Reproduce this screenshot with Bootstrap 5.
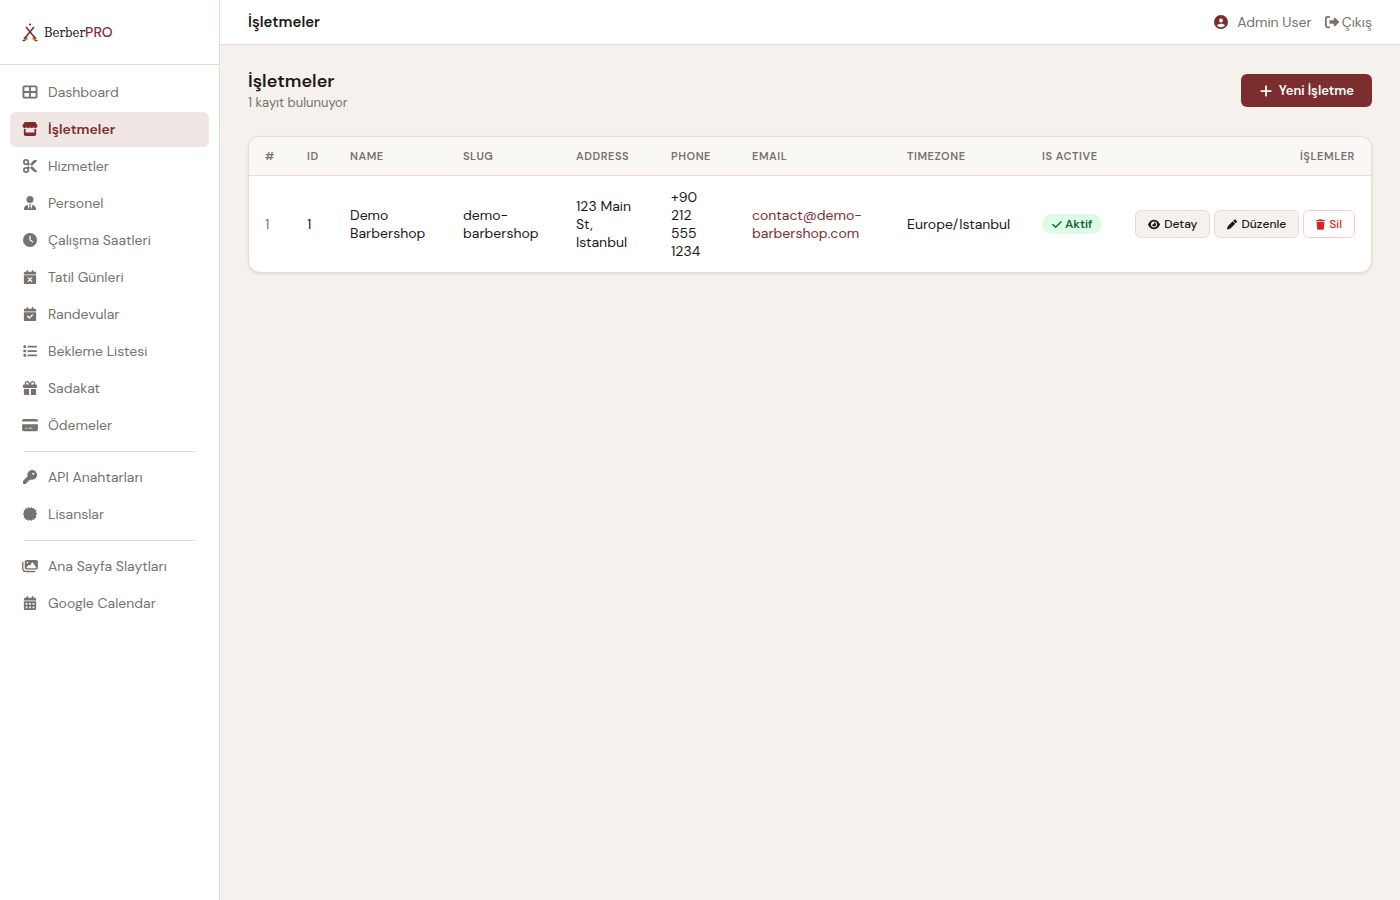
<!DOCTYPE html>
<html lang="tr">
<head>
<meta charset="utf-8">
<meta name="viewport" content="width=device-width, initial-scale=1">
<title>İşletmeler - BerberPRO</title>
<link rel="stylesheet" href="https://cdn.jsdelivr.net/npm/bootstrap@5.3.0/dist/css/bootstrap.min.css">
<style>
:root{--brand:#7c2d2d;--line:#e6dcd5;--muted:#78716c;--ink:#1c1917;--paper:#f5f1ec}
body{font-family:"DM Sans",Inter,sans-serif;font-size:14px;line-height:18px;color:var(--ink);background:var(--paper)}
a{text-decoration:none}
.ico{width:14px;height:14px;fill:currentColor;flex:none;overflow:visible}
.side{width:220px;background:#fff;border-right:1px solid var(--line)}
.brand{height:65px;padding:0 22px;gap:6px;border-bottom:1px solid var(--line);color:var(--ink);font:13px/20px "DejaVu Serif Condensed","DejaVu Serif",serif}
.brand b{color:var(--brand);font:500 14px/20px "DM Sans",Inter,sans-serif}
.menu{padding:10px}
.menu li{margin-bottom:2px}
.menu .nav-link{height:35px;padding:0 12px 1px;gap:10px;border-radius:6px;color:var(--muted)}
.menu .ico{width:16px}
.menu .nav-link.active{background:#f0e6e4;color:var(--brand);font-weight:600}
.menu .split{height:1px;margin:8px 14px;background:var(--line)}
.topbar{height:45px;padding:0 28px;background:#fff;border-bottom:1px solid var(--line);color:var(--muted)}
.topbar h2{font-size:15px;line-height:20px;font-weight:600;color:var(--ink)}
.topbar a{color:var(--muted);gap:3px}
.topbar .tools{gap:13px}
.topbar .who{gap:9px}
.topbar .who .ico{color:var(--brand)}
.page{padding:24px 28px}
.page h1{font-size:18px;line-height:24px;font-weight:600}
.page .count{font-size:13px;line-height:20px;color:var(--muted)}
.page-head{height:43px;margin-bottom:24px}
.btn-brand{--bs-btn-color:#fff;--bs-btn-bg:var(--brand);--bs-btn-hover-color:#fff;--bs-btn-hover-bg:#672525;--bs-btn-font-size:13px;--bs-btn-font-weight:600;--bs-btn-border-radius:6px;--bs-btn-line-height:18px;height:33px;padding:0 17px;gap:6px}
.panel{border:1px solid var(--line);border-radius:12px;background:#fff;overflow:hidden;box-shadow:0 1px 3px rgba(80,50,30,.12)}
.grid-table{table-layout:fixed;min-width:1122px;margin:0;--bs-table-bg:transparent;--bs-table-color:var(--ink);color:var(--ink)}
.grid-table th{padding:10px 16px;background:#faf8f5;color:var(--muted);font-size:11px;line-height:18px;font-weight:600;letter-spacing:.05em;border-bottom:1px solid var(--line);white-space:nowrap}
.grid-table td{padding:12px 16px;border:0;vertical-align:middle}
.grid-table td.row-no{color:var(--muted)}
.grid-table .mail{color:var(--brand)}
.c-num{width:42px}.c-id{width:43px}.c-wide{width:113px}.c-addr{width:95px}.c-phone{width:81px}.c-mail{width:155px}.c-zone{width:135px}.c-on{width:93px}.c-act{width:252px}
.state{display:inline-flex;align-items:center;gap:3px;height:20px;padding:0 10px;border-radius:10px;background:#dcfce7;color:#166534;font-size:12px;font-weight:600}
.state .ico{width:10px;height:11px}
.btn-row .ico{width:12px;height:11px}
.btn-row .ico-slim{width:10px}
.btn-row.del .ico{width:9px}
.btn-row{--bs-btn-font-size:12px;--bs-btn-font-weight:500;--bs-btn-line-height:16px;--bs-btn-border-radius:6px;--bs-btn-color:var(--ink);--bs-btn-bg:var(--paper);--bs-btn-border-color:var(--line);--bs-btn-hover-color:var(--ink);--bs-btn-hover-bg:#ece5dd;--bs-btn-hover-border-color:var(--line);height:28px;padding:0 12px;gap:4px}
.btn-row.del{--bs-btn-color:#dc2626;--bs-btn-bg:#fff;--bs-btn-border-color:#fecaca;--bs-btn-hover-color:#dc2626;--bs-btn-hover-bg:#fef2f2;--bs-btn-hover-border-color:#fecaca}
</style>
</head>
<body>
<svg class="d-none" xmlns="http://www.w3.org/2000/svg">
<symbol id="i-grid" viewBox="16 16 480 480"><path d="M448 96V224H288V96H448zm0 192V416H288V288H448zM224 224H64V96H224V224zM64 288H224V416H64V288zM64 32C28.7 32 0 60.7 0 96V416c0 35.3 28.7 64 64 64H448c35.3 0 64-28.7 64-64V96c0-35.3-28.7-64-64-64H64z"/></symbol>
<symbol id="i-store" viewBox="0 0 576 512"><path d="M547.6 103.8L490.3 13.1C485.2 5 476.1 0 466.4 0H109.6C99.9 0 90.8 5 85.7 13.1L28.3 103.8c-29.6 46.8-3.4 111.9 51.9 119.4c4 .5 8.1 .8 12.1 .8c26.1 0 49.3-11.4 65.2-29c15.9 17.6 39.1 29 65.2 29c26.1 0 49.3-11.4 65.2-29c15.9 17.6 39.1 29 65.2 29c26.2 0 49.3-11.4 65.2-29c16 17.6 39.1 29 65.2 29c4.1 0 8.1-.3 12.1-.8c55.5-7.4 81.8-72.5 52.1-119.4zM499.7 254.9l-.1 0c-5.3 .7-10.7 1.1-16.2 1.1c-12.4 0-24.3-1.9-35.4-5.3V384H128V250.6c-11.2 3.5-23.2 5.4-35.6 5.4c-5.5 0-11-.4-16.3-1.1l-.1 0c-4.1-.6-8.1-1.3-12-2.3V448c0 35.3 28.7 64 64 64H448c35.3 0 64-28.7 64-64V252.6c-4 1-8 1.8-12.3 2.3z"/></symbol>
<symbol id="i-cut" viewBox="0 0 512 512"><g fill="none" stroke="currentColor" stroke-width="64"><circle cx="112" cy="112" r="80"/><circle cx="112" cy="400" r="80"/></g><path d="M140 200L200 130L508 440C516 450 512 456 504 462C464 490 412 486 376 452zM140 312L200 382L508 72C516 62 512 56 504 50C464 22 412 26 376 60z"/></symbol>
<symbol id="i-tie" viewBox="0 0 448 512"><path d="M96 128a128 128 0 1 0 256 0A128 128 0 1 0 96 128zm94.5 200.2l18.6 31L175.8 483.1l-36-146.9c-2-8.1-9.8-13.4-17.9-11.3C51.9 342.4 0 405.8 0 481.3c0 17 13.8 30.7 30.7 30.7H417.3c17 0 30.7-13.8 30.7-30.7c0-75.5-51.9-138.9-121.9-156.4c-8.1-2-15.9 3.3-17.9 11.3l-36 146.9L238.9 359.2l18.6-31c6.4-10.7-1.3-24.2-13.7-24.2H204.3c-12.4 0-20.1 13.6-13.7 24.2z"/></symbol>
<symbol id="i-clock" viewBox="0 0 512 512"><path d="M256 0a256 256 0 1 1 0 512A256 256 0 1 1 256 0zM232 120V256c0 8 4 15.5 10.7 20l96 64c11 7.4 25.9 4.4 33.3-6.7s4.4-25.9-6.7-33.3L280 243.2V120c0-13.3-10.7-24-24-24s-24 10.7-24 24z"/></symbol>
<symbol id="i-calx" viewBox="0 0 448 512"><path d="M128 0c17.7 0 32 14.3 32 32V64H288V32c0-17.7 14.3-32 32-32s32 14.3 32 32V64h48c26.5 0 48 21.5 48 48v48H0V112C0 85.5 21.5 64 48 64H96V32c0-17.7 14.3-32 32-32zM0 192H448V464c0 26.5-21.5 48-48 48H48c-26.5 0-48-21.5-48-48V192z"/><path d="M161 289L287 415M287 289L161 415" stroke="#fff" stroke-width="48" stroke-linecap="round"/></symbol>
<symbol id="i-calok" viewBox="0 0 448 512"><path d="M128 0c17.7 0 32 14.3 32 32V64H288V32c0-17.7 14.3-32 32-32s32 14.3 32 32V64h48c26.5 0 48 21.5 48 48v48H0V112C0 85.5 21.5 64 48 64H96V32c0-17.7 14.3-32 32-32zM0 192H448V464c0 26.5-21.5 48-48 48H48c-26.5 0-48-21.5-48-48V192zM329 305c9.4-9.4 9.4-24.6 0-33.9s-24.6-9.4-33.9 0l-95 95-47-47c-9.4-9.4-24.6-9.4-33.9 0s-9.4 24.6 0 33.9l64 64c9.4 9.4 24.6 9.4 33.9 0L329 305z"/></symbol>
<symbol id="i-list" viewBox="0 0 512 512"><rect x="16" y="48" width="96" height="96" rx="24"/><rect x="16" y="208" width="96" height="96" rx="24"/><rect x="16" y="368" width="96" height="96" rx="24"/><rect x="160" y="64" width="352" height="64" rx="32"/><rect x="160" y="224" width="352" height="64" rx="32"/><rect x="160" y="384" width="352" height="64" rx="32"/></symbol>
<symbol id="i-gift" viewBox="0 0 512 512"><path d="M190.5 68.8L225.3 128H224 152c-22.1 0-40-17.9-40-40s17.9-40 40-40h2.2c14.9 0 28.8 7.9 36.3 20.8zM64 88c0 14.4 3.5 28 9.6 40H32c-17.7 0-32 14.3-32 32v64c0 17.7 14.3 32 32 32H480c17.7 0 32-14.3 32-32V160c0-17.7-14.3-32-32-32H438.4c6.1-12 9.6-25.6 9.6-40c0-48.6-39.4-88-88-88h-2.2c-31.9 0-61.5 16.9-77.7 44.4L256 85.5l-24.1-41C215.7 16.9 186.1 0 154.2 0H152C103.4 0 64 39.4 64 88zm336 0c0 22.1-17.9 40-40 40H288h-1.3l34.8-59.2C329.1 55.9 342.9 48 357.8 48H360c22.1 0 40 17.9 40 40zM32 288V464c0 26.5 21.5 48 48 48H224V288H32zM288 512H432c26.5 0 48-21.5 48-48V288H288V512z"/></symbol>
<symbol id="i-card" viewBox="0 0 576 512"><path d="M64 32C28.7 32 0 60.7 0 96v32H576V96c0-35.3-28.7-64-64-64H64zM576 224H0V416c0 35.3 28.7 64 64 64H512c35.3 0 64-28.7 64-64V224zM112 352h64c8.8 0 16 7.2 16 16s-7.2 16-16 16H112c-8.8 0-16-7.2-16-16s7.2-16 16-16zm112 16c0-8.8 7.2-16 16-16H368c8.8 0 16 7.2 16 16s-7.2 16-16 16H240c-8.8 0-16-7.2-16-16z"/></symbol>
<symbol id="i-key" viewBox="0 0 512 512"><path d="M336 352c97.2 0 176-78.8 176-176S433.2 0 336 0S160 78.8 160 176c0 18.7 2.9 36.8 8.3 53.7L7 391c-4.5 4.5-7 10.6-7 17v80c0 13.3 10.7 24 24 24h80c13.3 0 24-10.7 24-24V448h40c13.3 0 24-10.7 24-24V384h40c6.4 0 12.5-2.5 17-7l33.3-33.3c16.9 5.4 35 8.3 53.7 8.3zM376 96a40 40 0 1 1 0 80 40 40 0 1 1 0-80z"/></symbol>
<symbol id="i-seal" viewBox="0 0 512 512"><path d="M256 42L312 2 346 54L412 40 424 104L490 118 472 184L512 256 472 328L490 394 424 408L412 472 346 458L312 510 256 470L200 510 166 458L100 472 88 408L22 394 40 328L0 256 40 184L22 118 88 104L100 40 166 54L200 2z"/></symbol>
<symbol id="i-images" viewBox="0 0 576 512"><path fill-rule="evenodd" d="M160 32C125 32 96 61 96 96V320C96 355 125 384 160 384H512C547 384 576 355 576 320V96C576 61 547 32 512 32zM396 138L508 302C520 320 510 336 488 336H184C164 336 154 318 166 302L230 224C240 212 258 212 268 224L286 246L356 138C366 124 386 124 396 138zM192 96a32 32 0 1 1 0 64a32 32 0 1 1 0-64z"/><path d="M24 120V344C24 410 78 456 136 456H456" fill="none" stroke="currentColor" stroke-width="48" stroke-linecap="round"/></symbol>
<symbol id="i-cal" viewBox="0 0 448 512"><path fill-rule="evenodd" d="M128 0c17.7 0 32 14.3 32 32V64H288V32c0-17.7 14.3-32 32-32s32 14.3 32 32V64h48c26.5 0 48 21.5 48 48v48H0V112C0 85.5 21.5 64 48 64H96V32c0-17.7 14.3-32 32-32zM0 192H448V464c0 26.5-21.5 48-48 48H48c-26.5 0-48-21.5-48-48zM64 256V320H128V256zM192 256V320H256V256zM320 256V320H384V256zM64 384V448H128V384zM192 384V448H256V384zM320 384V448H384V384z"/></symbol>
<symbol id="i-user" viewBox="0 0 512 512"><path d="M399 384.2C376.9 345.8 335.4 320 288 320H224c-47.4 0-88.9 25.8-111 64.2c35.2 39.2 86.2 63.8 143 63.8s107.8-24.7 143-63.8zM0 256a256 256 0 1 1 512 0A256 256 0 1 1 0 256zm256 16a72 72 0 1 0 0-144 72 72 0 1 0 0 144z"/></symbol>
<symbol id="i-exit" viewBox="0 0 512 512"><path d="M377.9 105.9L500.7 228.7c7.2 7.2 11.3 17.1 11.3 27.3s-4.1 20.1-11.3 27.3L377.9 406.1c-6.4 6.4-15 9.9-24 9.9c-18.7 0-33.9-15.2-33.9-33.9l0-62.1-128 0c-17.7 0-32-14.3-32-32l0-64c0-17.7 14.3-32 32-32l128 0 0-62.1c0-18.7 15.2-33.9 33.9-33.9c9 0 17.6 3.6 24 9.9zM160 96L96 96c-17.7 0-32 14.3-32 32l0 256c0 17.7 14.3 32 32 32l64 0c17.7 0 32 14.3 32 32s-14.3 32-32 32l-64 0c-53 0-96-43-96-96L0 128C0 75 43 32 96 32l64 0c17.7 0 32 14.3 32 32s-14.3 32-32 32z"/></symbol>
<symbol id="i-plus" viewBox="0 0 448 512"><path d="M256 80c0-17.7-14.3-32-32-32s-32 14.3-32 32V224H48c-17.7 0-32 14.3-32 32s14.3 32 32 32H192V432c0 17.7 14.3 32 32 32s32-14.3 32-32V288H400c17.7 0 32-14.3 32-32s-14.3-32-32-32H256V80z"/></symbol>
<symbol id="i-check" viewBox="0 0 448 512"><path d="M438.6 105.4c12.5 12.5 12.5 32.8 0 45.3l-256 256c-12.5 12.5-32.8 12.5-45.3 0l-128-128c-12.5-12.5-12.5-32.8 0-45.3s32.8-12.5 45.3 0L160 338.7 393.4 105.4c12.5-12.5 32.8-12.5 45.3 0z"/></symbol>
<symbol id="i-eye" viewBox="0 0 576 512"><path d="M288 32c-80.8 0-145.5 36.8-192.6 80.6C48.6 156 17.3 208 2.5 243.7c-3.3 7.9-3.3 16.7 0 24.6C17.3 304 48.6 356 95.4 399.4C142.5 443.2 207.2 480 288 480s145.5-36.8 192.6-80.6c46.8-43.5 78.1-95.4 93-131.1c3.3-7.9 3.3-16.7 0-24.6c-14.9-35.7-46.2-87.7-93-131.1C433.5 68.8 368.8 32 288 32zM144 256a144 144 0 1 1 288 0 144 144 0 1 1 -288 0zm144-64c0 35.3-28.7 64-64 64c-7.1 0-13.9-1.2-20.3-3.3c-5.5-1.8-11.9 1.6-11.7 7.4c.3 6.9 1.3 13.8 3.2 20.7c13.7 51.2 66.4 81.6 117.6 67.9s81.6-66.4 67.9-117.6c-11.1-41.5-47.8-69.4-88.6-71.1c-5.8-.2-9.2 6.1-7.4 11.7c2.1 6.4 3.3 13.2 3.3 20.3z"/></symbol>
<symbol id="i-pen" viewBox="0 0 512 512"><path d="M362.7 19.3L314.3 67.7 444.3 197.7l48.4-48.4c25-25 25-65.5 0-90.5L453.3 19.3c-25-25-65.5-25-90.5 0zm-71 71L58.6 323.5c-10.4 10.4-18 23.3-22.2 37.4L1 481.2C-1.5 489.7 .8 498.8 7 505s15.3 8.5 23.7 6.1l120.3-35.4c14.1-4.2 27-11.8 37.4-22.2L421.7 220.3 291.7 90.3z"/></symbol>
<symbol id="i-trash" viewBox="0 0 448 512"><path d="M135.2 17.7L128 32H32C14.3 32 0 46.3 0 64S14.3 96 32 96H416c17.7 0 32-14.3 32-32s-14.3-32-32-32H320l-7.2-14.3C307.4 6.8 296.3 0 284.2 0H163.8c-12.1 0-23.2 6.8-28.6 17.7zM416 128H32L53.2 467c1.6 25.3 22.6 45 47.9 45H346.9c25.3 0 46.3-19.7 47.9-45L416 128z"/></symbol>
</svg>
<div class="d-flex min-vh-100">
<aside class="side flex-shrink-0">
<a class="brand d-flex align-items-center" href="#">
<svg width="16" height="20" viewBox="0 0 16 20" class="flex-shrink-0" fill="none" stroke="#7c2d2d" aria-hidden="true"><circle cx="3.5" cy="16.6" r="2.1" fill="#b5834f" stroke="none"/><circle cx="12.5" cy="16.6" r="2.1" fill="#b5834f" stroke="none"/><circle cx="8" cy="2.5" r="1.1" fill="#7c2d2d" stroke="none"/><path d="M4 5L13.5 16.5M12 5L2.500 16.500" stroke-width="1.6"/><path d="M.5 18.600H3M13 18.600H15.500" stroke-width="1.3"/></svg><span>Berber<b>PRO</b></span></a>
<nav class="menu" aria-label="Ana menü">
<ul class="list-unstyled mb-0">
<li><a class="nav-link d-flex align-items-center" href="#"><svg class="ico"><use href="#i-grid"/></svg>Dashboard</a></li>
<li><a class="nav-link active d-flex align-items-center" href="#" aria-current="page"><svg class="ico"><use href="#i-store"/></svg>İşletmeler</a></li>
<li><a class="nav-link d-flex align-items-center" href="#"><svg class="ico"><use href="#i-cut"/></svg>Hizmetler</a></li>
<li><a class="nav-link d-flex align-items-center" href="#"><svg class="ico"><use href="#i-tie"/></svg>Personel</a></li>
<li><a class="nav-link d-flex align-items-center" href="#"><svg class="ico"><use href="#i-clock"/></svg>Çalışma Saatleri</a></li>
<li><a class="nav-link d-flex align-items-center" href="#"><svg class="ico"><use href="#i-calx"/></svg>Tatil Günleri</a></li>
<li><a class="nav-link d-flex align-items-center" href="#"><svg class="ico"><use href="#i-calok"/></svg>Randevular</a></li>
<li><a class="nav-link d-flex align-items-center" href="#"><svg class="ico"><use href="#i-list"/></svg>Bekleme Listesi</a></li>
<li><a class="nav-link d-flex align-items-center" href="#"><svg class="ico"><use href="#i-gift"/></svg>Sadakat</a></li>
<li><a class="nav-link d-flex align-items-center" href="#"><svg class="ico"><use href="#i-card"/></svg>Ödemeler</a></li>
<li class="split" role="separator"></li>
<li><a class="nav-link d-flex align-items-center" href="#"><svg class="ico"><use href="#i-key"/></svg>API Anahtarları</a></li>
<li><a class="nav-link d-flex align-items-center" href="#"><svg class="ico"><use href="#i-seal"/></svg>Lisanslar</a></li>
<li class="split" role="separator"></li>
<li><a class="nav-link d-flex align-items-center" href="#"><svg class="ico"><use href="#i-images"/></svg>Ana Sayfa Slaytları</a></li>
<li><a class="nav-link d-flex align-items-center" href="#"><svg class="ico"><use href="#i-cal"/></svg>Google Calendar</a></li>
</ul>
</nav>
</aside>
<div class="flex-grow-1 overflow-hidden">
<header class="topbar d-flex align-items-center justify-content-between">
<h2 class="mb-0">İşletmeler</h2>
<div class="tools d-flex align-items-center">
<span class="who d-flex align-items-center"><svg class="ico"><use href="#i-user"/></svg>Admin User</span>
<a class="d-flex align-items-center" href="#"><svg class="ico"><use href="#i-exit"/></svg>Çıkış</a>
</div>
</header>
<main class="page">
<div class="page-head d-flex align-items-center justify-content-between">
<div><h1 class="mb-0">İşletmeler</h1><div class="count">1 kayıt bulunuyor</div></div>
<button type="button" class="btn btn-brand d-flex align-items-center"><svg class="ico"><use href="#i-plus"/></svg>Yeni İşletme</button>
</div>
<div class="panel"><div class="table-responsive">
<table class="table grid-table">
<colgroup><col class="c-num"><col class="c-id"><col class="c-wide"><col class="c-wide"><col class="c-addr"><col class="c-phone"><col class="c-mail"><col class="c-zone"><col class="c-on"><col class="c-act"></colgroup>
<thead><tr><th>#</th><th>ID</th><th>NAME</th><th>SLUG</th><th>ADDRESS</th><th>PHONE</th><th>EMAIL</th><th>TIMEZONE</th><th>IS ACTIVE</th><th class="text-end">İŞLEMLER</th></tr></thead>
<tbody><tr>
<td class="row-no">1</td><td>1</td><td>Demo Barbershop</td><td>demo-barbershop</td><td>123 Main St, Istanbul</td><td>+90 212 555 1234</td>
<td><a class="mail" href="mailto:contact@demo-barbershop.com">contact@demo-barbershop.com</a></td><td class="text-nowrap">Europe/Istanbul</td>
<td><span class="state"><svg class="ico"><use href="#i-check"/></svg>Aktif</span></td>
<td><div class="d-flex justify-content-end gap-1">
<button type="button" class="btn btn-row d-flex align-items-center"><svg class="ico"><use href="#i-eye"/></svg>Detay</button>
<button type="button" class="btn btn-row d-flex align-items-center"><svg class="ico ico-slim"><use href="#i-pen"/></svg>Düzenle</button>
<button type="button" class="btn btn-row del d-flex align-items-center"><svg class="ico"><use href="#i-trash"/></svg>Sil</button>
</div></td>
</tr></tbody>
</table>
</div></div>
</main>
</div>
</div>
<script src="https://cdn.jsdelivr.net/npm/bootstrap@5.3.0/dist/js/bootstrap.bundle.min.js"></script>
</body>
</html>
